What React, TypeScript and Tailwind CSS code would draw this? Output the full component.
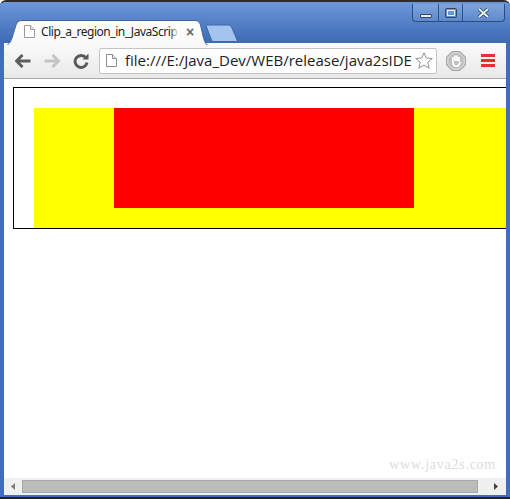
import React from "react";

function Tab() {
  return (
    <svg width="222" height="26" viewBox="0 0 222 26" className="absolute left-[5px] top-[18px]">
      <defs>
        <linearGradient id="tabg" x1="0" y1="0" x2="0" y2="1">
          <stop offset="0" stopColor="#ffffff" />
          <stop offset="1" stopColor="#f8f8f8" />
        </linearGradient>
      </defs>
      <path d="M0 26 C4 25 5.500 22 7 18 L11 5 C12 2 14 .5 17 .5 L190 .5 C193 .5 194.500 2 195.500 5 L198 16 C199.500 22 201 25 204 26 Z" fill="url(#tabg)" stroke="#3f6aa8" strokeWidth="1" />
      <rect x="0" y="25" width="204" height="1" fill="#f7f7f7" />
    </svg>
  );
}

function NewTab() {
  return (
    <svg width="34" height="18" viewBox="0 0 34 18" className="absolute left-[205px] top-[22px]">
      <path d="M2.500 1 L23 1 C25 1 26 2 27 4 L32 16 C32.500 17 32 17.500 31 17.500 L9 17.500 C7.500 17.500 7 17 6.500 16 L1.500 3 C1 2 1.500 1 2.500 1 Z" fill="#a3c4ef" stroke="#3f68a6" />
    </svg>
  );
}

function Page({ color = "#8a8f96" }: { color?: string }) {
  return (
    <svg width="11" height="13" viewBox="0 0 11 13" className="shrink-0">
      <path d="M.5 .5 H6.500 L10.500 4.500 V12.500 H.5 Z" fill="#fff" stroke={color} />
      <path d="M6.500 .5 V4.500 H10.500" fill="#e9e9e9" stroke={color} />
    </svg>
  );
}

function Arrow({ color, flip }: { color: string; flip?: boolean }) {
  return (
    <svg width="16" height="14" viewBox="0 0 16 14" style={flip ? { transform: "scaleX(-1)" } : undefined}>
      <path d="M7.500 1 L1.500 7 L7.500 13 M2 7 H15.500" fill="none" stroke={color} strokeWidth="3" />
    </svg>
  );
}

function Reload() {
  return (
    <svg width="16" height="16" viewBox="0 0 16 16">
      <path d="M13 5 A6 6 0 1 0 14 9.500" fill="none" stroke="#5a5a5a" strokeWidth="3" />
      <path d="M9.500 6.500 H15.500 V.5 Z" fill="#5a5a5a" />
    </svg>
  );
}

function Star() {
  return (
    <svg width="18" height="17" viewBox="0 0 18 17" className="shrink-0">
      <path d="M9 .8 L11.300 6 L17.300 6.500 L12.700 10.300 L14.200 16.200 L9 13 L3.800 16.200 L5.300 10.300 L.7 6.500 L6.700 6 Z" fill="#fff" stroke="#8f8f8f" />
    </svg>
  );
}

function Stop() {
  return (
    <svg width="20" height="20" viewBox="0 0 20 20">
      <path d="M6 .5 H14 L19.500 6 V14 L14 19.500 H6 L.5 14 V6 Z" fill="#b9b9b9" stroke="#a4a4a4" />
      <path d="M7 1.800 H13 L18.200 7 V13 L13 18.200 H7 L1.800 13 V7 Z" fill="#bfbfbf" stroke="#e2e2e2" />
      <path d="M6.800 11 V6 M8.900 10 V4.500 M11 10 V4.500 M13 10.500 V6 M6.800 10 L7.500 14 C8.500 15.500 11.500 15.500 12.500 14.500 L14.500 11" fill="none" stroke="#fff" strokeWidth="1.800" />
    </svg>
  );
}

function Caption() {
  return (
    <div className="absolute right-[5px] top-[2px] flex h-[18px] w-[93px] rounded-b-[4px] border border-t-0 border-[#2a4c80] bg-gradient-to-b from-[#7fa5dc] to-[#5d89cc]">
      <div className="flex w-[26px] items-end justify-center border-r border-[#2f5288] pb-[3px]">
        <div className="h-[4px] w-[12px] rounded-[1px] border border-[#34465f] bg-[#e8eef6]" />
      </div>
      <div className="flex w-[24px] items-center justify-center border-r border-[#2f5288]">
        <div className="h-[10px] w-[12px] rounded-[2px] border border-[#34465f] p-[1px]">
          <div className="h-full w-full border border-[#e8eef6]" />
        </div>
      </div>
      <div className="flex flex-1 items-center justify-center">
        <svg width="13" height="10" viewBox="0 0 13 10">
          <path d="M2 1 L11 9 M11 1 L2 9" stroke="#34465f" strokeWidth="3.400" />
          <path d="M2 1 L11 9 M11 1 L2 9" stroke="#eef3f9" strokeWidth="1.800" />
        </svg>
      </div>
    </div>
  );
}

export default function App() {
  return (
    <div className="relative flex h-[499px] w-[510px] flex-col overflow-hidden rounded-t-[6px] border-t-2 border-[#2c2c2c] bg-[#3f6ec0] font-['Liberation_Sans',sans-serif]">
      <div className="h-[41px] shrink-0 bg-gradient-to-b from-[#6d97da] to-[#3d6ab3]" />
      <Caption />
      <Tab />
      <NewTab />
      <div className="absolute left-[41px] top-[19px] flex h-[22px] w-[175px] items-center">
        <div className="absolute left-[-17px] top-[4px]"><Page color="#9a9a9a" /></div>
        <div className="relative w-[138px] overflow-hidden">
          <span className="block whitespace-nowrap font-['Noto_Sans',sans-serif] text-[12px] tracking-[-0.45px] text-[#222]">Clip_a_region_in_JavaScrip</span>
          <div className="absolute inset-y-0 right-0 w-[9px] bg-gradient-to-r from-transparent to-white" />
        </div>
        <span className="ml-[7px] text-[14px] font-bold leading-none text-[#666]">×</span>
      </div>

      <div className="mx-[4px] flex min-h-0 flex-1 flex-col bg-white">
        <div className="flex h-[36px] shrink-0 items-center border-b border-[#a8a8a8] bg-gradient-to-b from-[#fafafa] to-[#e9e9e9] pl-[11px]">
          <Arrow color="#5d5d5d" />
          <div className="ml-[13px]"><Arrow color="#c4c4c4" flip /></div>
          <div className="ml-[13px]"><Reload /></div>
          <div className="ml-[10px] flex h-[26px] w-[338px] items-center overflow-hidden rounded-[2px] border border-[#c4c4c4] bg-white pl-[6px]">
            <Page />
            <span className="ml-[8px] w-[287px] shrink-0 overflow-hidden whitespace-nowrap font-['Open_Sans',sans-serif] text-[15px] text-[#222]">file:///E:/Java_Dev/WEB/release/java2sIDE</span>
            <div className="ml-[3px] flex"><Star /></div>
          </div>
          <div className="ml-[9px]"><Stop /></div>
          <div className="ml-[15px] flex w-[14px] flex-col gap-[2px]">
            <div className="h-[3px] bg-[#e03030]" />
            <div className="h-[3px] bg-[#e03030]" />
            <div className="h-[3px] bg-[#e03030]" />
          </div>
        </div>

        <div className="relative min-h-0 flex-1 overflow-hidden bg-white px-[9px] pt-[8px]">
          <div className="h-[142px] w-[700px] border border-black bg-white pl-[20px] pt-[20px]">
            <div className="flex h-[120px] w-[600px] bg-[#ffff00] pl-[80px]">
              <div className="h-[100px] w-[300px] bg-[#ff0000]" />
            </div>
          </div>
          <span className="absolute bottom-[3px] right-[10px] font-['Liberation_Serif',serif] text-[14px] tracking-[0.75px] text-[#dcdcdc]">www.java2s.com</span>
        </div>

        <div className="flex h-[17px] shrink-0 items-center bg-[#f0f0f0]">
          <svg width="18" height="17" viewBox="0 0 18 17" className="shrink-0">
            <path d="M11 5 L7 8.500 L11 12 Z" fill="#7a7a7a" />
          </svg>
          <div className="h-[13px] flex-1 border border-[#a8a8a8] bg-[#bcbcbc]" />
          <svg width="18" height="17" viewBox="0 0 18 17" className="ml-[10px] shrink-0">
            <path d="M6 5 L10 8.500 L6 12 Z" fill="#404040" />
          </svg>
        </div>
      </div>
      <div className="h-[2px] shrink-0 bg-[#3f6ec0]" />
      <div className="h-[2px] shrink-0 bg-[#222]" />
    </div>
  );
}
